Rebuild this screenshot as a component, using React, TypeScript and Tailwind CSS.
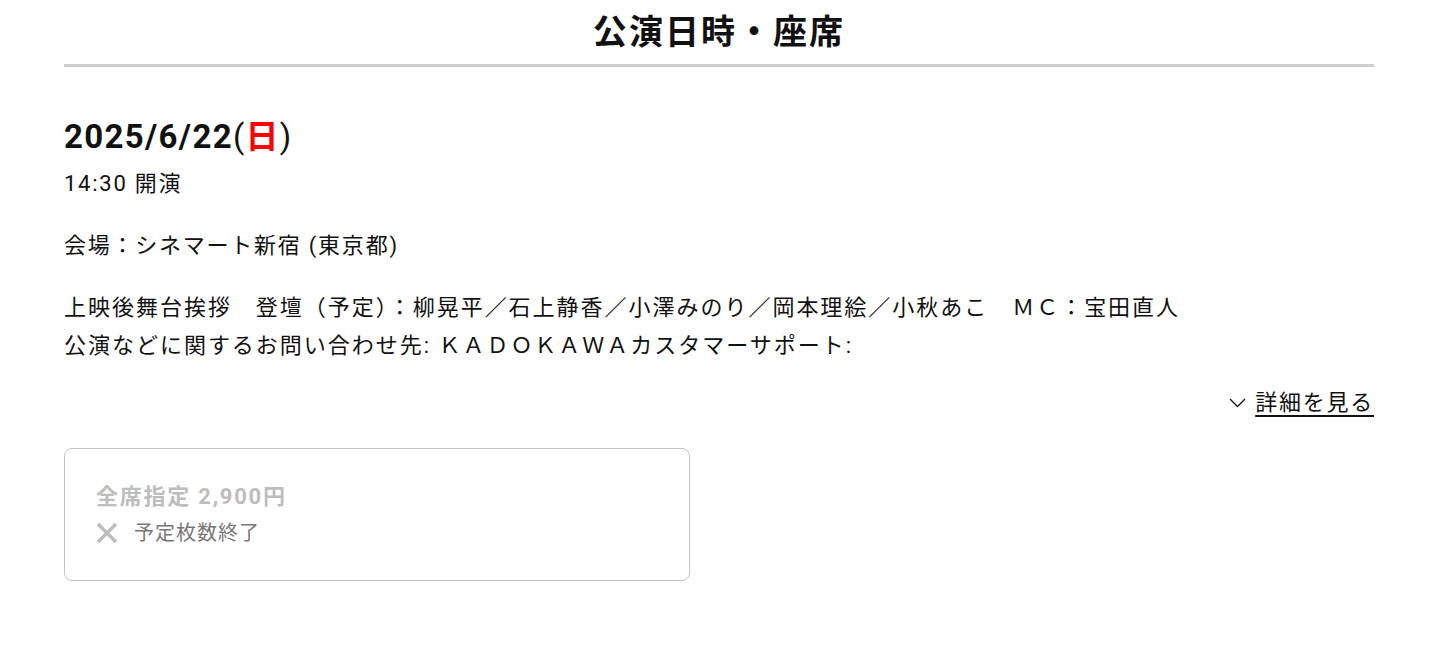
const font = "font-['Roboto','Noto_Sans_CJK_JP',sans-serif]";

export default function App() {
  return (
    <div className={`min-h-screen w-full bg-white text-[#111] ${font}`}>
      <div className="ml-[64px] w-[1310px]">
        <h2 className="flex h-[67px] items-center justify-center border-b-[3px] border-[#cfcfcf] text-[34px] font-bold tracking-[0.06em] leading-none">
          公演日時・座席
        </h2>

        <div className="mt-[46px] text-[33px] font-bold leading-[48px] tracking-[0.04em]">
          2025/6/22<span className="font-normal">(</span>
          <span className="text-[#ff0000]">日</span>
          <span className="font-normal">)</span>
        </div>
        <div className="mt-[5px] text-[22px] leading-[36px] tracking-[0.08em]">14:30 開演</div>

        <p className="mt-[26px] text-[22px] leading-[36px] tracking-[0.08em]">会場：シネマート新宿 (東京都)</p>

        <p className="mt-[25px] text-[22px] leading-[38px] tracking-[0.09em]">
          上映後舞台挨拶　登壇（予定）：柳晃平／石上静香／小澤みのり／岡本理絵／小秋あこ　ＭＣ：宝田直人
          <br />
          公演などに関するお問い合わせ先: ＫＡＤＯＫＡＷＡカスタマーサポート:
        </p>

        <div className="mt-[20px] flex justify-end">
          <button type="button" className="flex items-center gap-[9px] text-[22px] leading-[36px] tracking-[0.08em]">
            <svg width="17" height="10" viewBox="0 0 17 10" className="shrink-0">
              <path d="M1 1 L8.5 8.5 L16 1" fill="none" stroke="#111" strokeWidth="1.3" />
            </svg>
            <span className="underline underline-offset-[5px] decoration-[1.5px]">詳細を見る</span>
          </button>
        </div>

        <div className="mt-[27px] w-[626px] rounded-[8px] border border-[#c4c4c4] px-[31px] pb-[32px] pt-[33px]">
          <div className="text-[22px] font-bold leading-[30px] tracking-[0.08em] text-[#bdbdbd]">全席指定 2,900円</div>
          <div className="mt-[6px] flex items-center gap-[16px] leading-[30px]">
            <svg width="22" height="22" viewBox="0 0 22 22" className="shrink-0">
              <path d="M2 2 L20 20 M20 2 L2 20" stroke="#bdbdbd" strokeWidth="3.5" strokeLinecap="butt" />
            </svg>
            <span className="text-[20px] tracking-[0.05em] text-[#777]">予定枚数終了</span>
          </div>
        </div>
      </div>
    </div>
  );
}
